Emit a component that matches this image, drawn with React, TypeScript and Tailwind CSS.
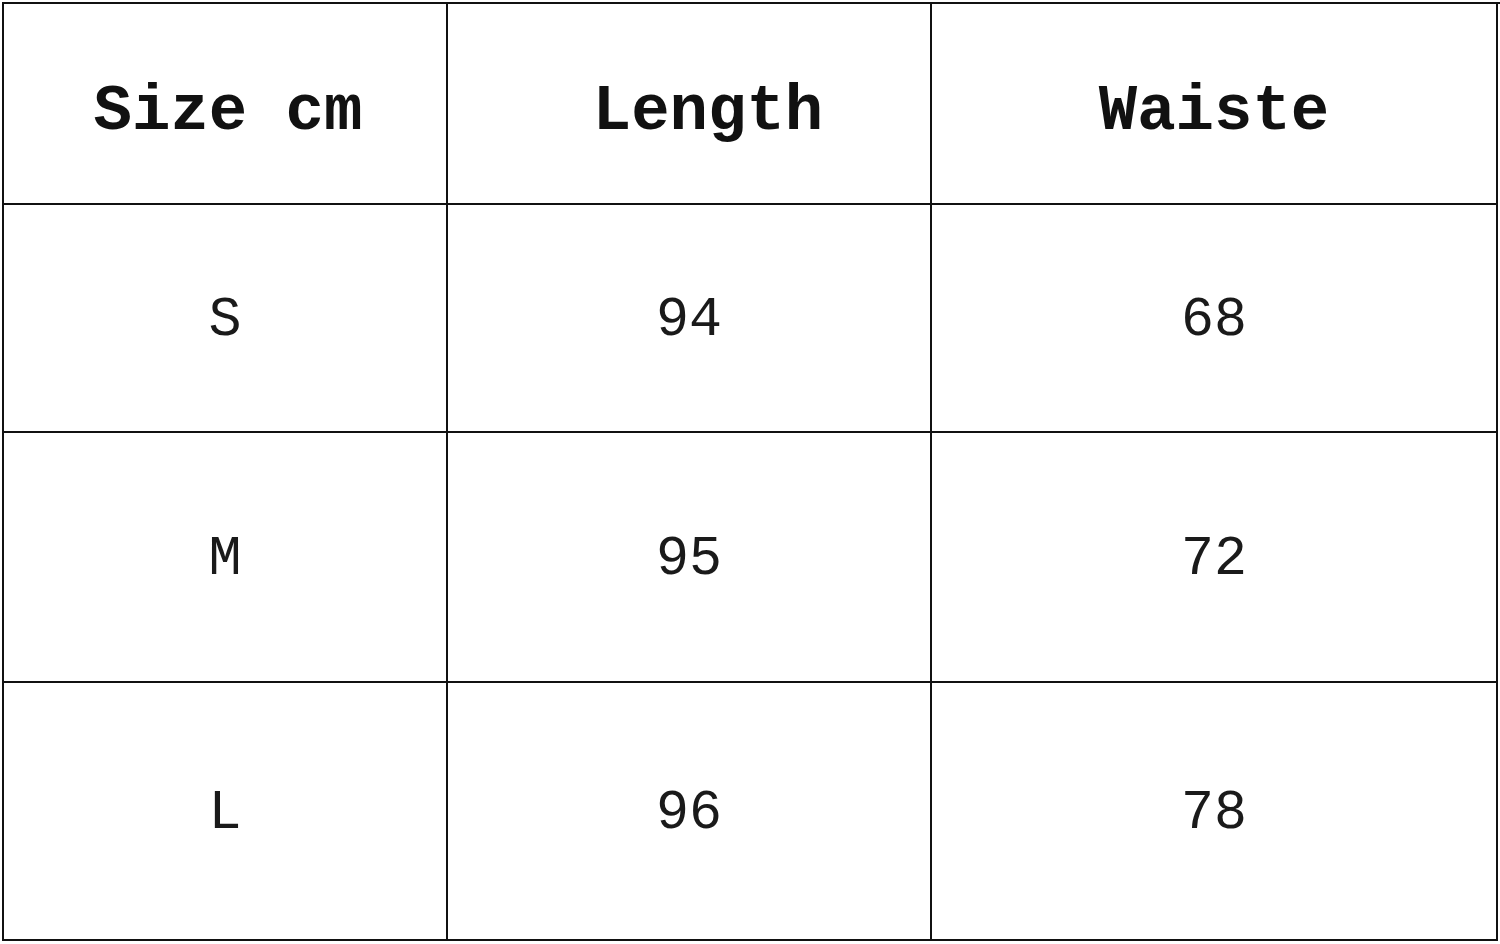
import React from 'react';

const headers = [
  { label: 'Size cm', pad: 'pl-[6px]' },
  { label: 'Length', pad: 'pl-[38px]' },
  { label: 'Waiste', pad: 'pl-[0px]' },
];

const rows = [
  ['S', '94', '68'],
  ['M', '95', '72'],
  ['L', '96', '78'],
];

export default function App() {
  return (
    <div className="w-[1500px] h-[944px] bg-white pl-[2px] pt-[2px]">
      <div
        className="grid grid-cols-[444px_484px_566px] grid-rows-[201px_228px_250px_258px] border-l-2 border-t-2 border-[#111] text-[#111]"
        style={{ fontFamily: '"Liberation Mono", "DejaVu Sans Mono", monospace' }}
      >
        {headers.map((h) => (
          <div
            key={h.label}
            className={`flex items-center justify-center border-r-2 border-b-2 border-[#111] text-[64px] font-bold pt-[16px] ${h.pad}`}
          >
            {h.label}
          </div>
        ))}
        {rows.map((row) =>
          row.map((cell, i) => (
            <div
              key={row[0] + i}
              className="flex items-center justify-center border-r-2 border-b-2 border-[#111] text-[55px] text-[#1a1a1a] pt-[6px]"
            >
              {cell}
            </div>
          ))
        )}
      </div>
    </div>
  );
}
